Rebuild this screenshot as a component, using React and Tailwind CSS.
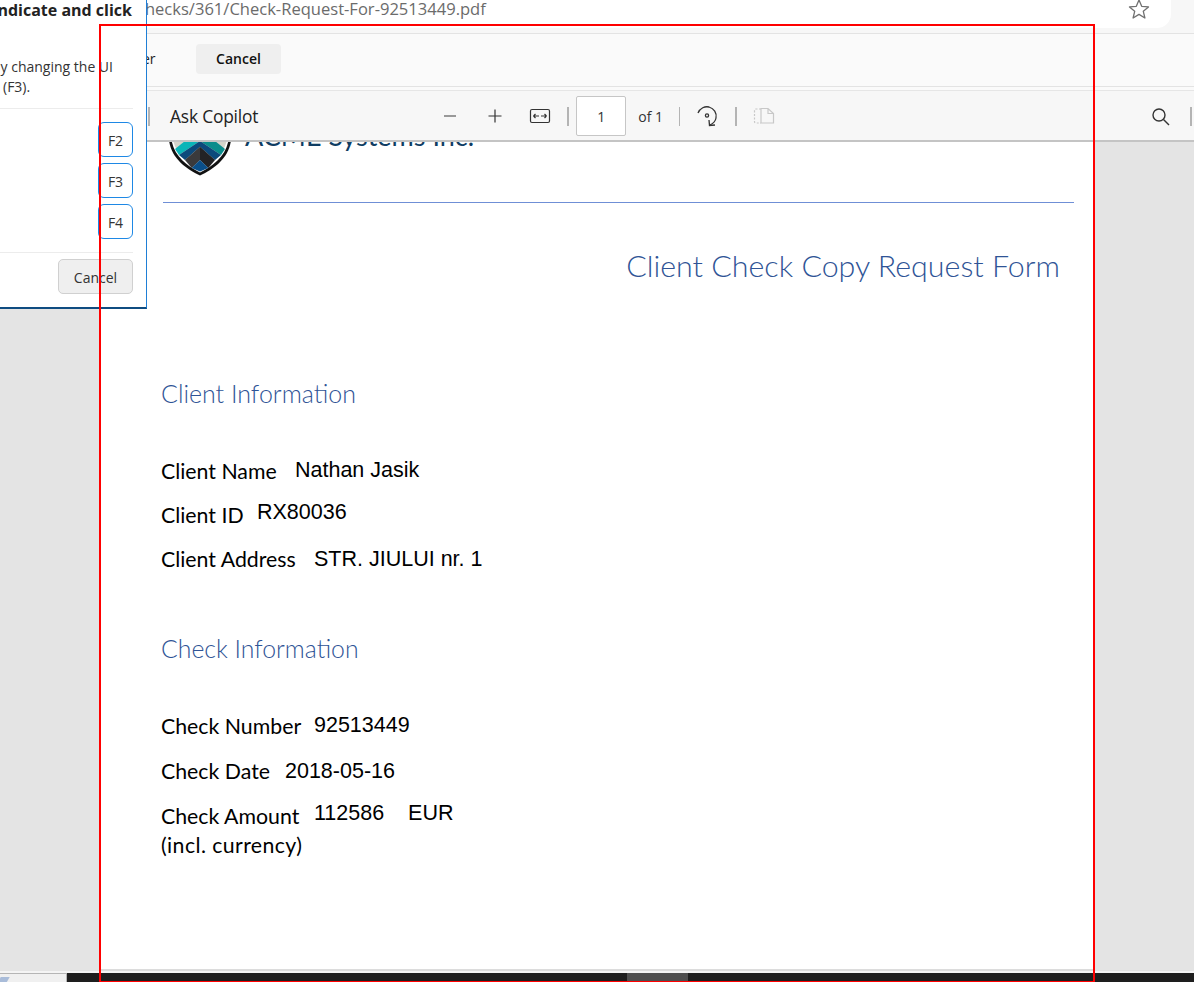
import React from "react";

function Shield() {
  return (
    <svg width="64" height="50" viewBox="0 0 64 50" className="block">
      <path d="M0 0 L0 8 C2 26 17 37 31 43.500 C45 37 60 26 62 8 L62 0 Z" fill="#111" />
      <path d="M2.500 0 L2.500 8 C5 24 18 34 31 40.500 C44 34 57 24 59.500 8 L59.500 0 Z" fill="#fff" />
      <path d="M4 0 L4 8 C7 22 19 32 31 39 C43 32 55 22 58 8 L58 0 Z" fill="#d4d4ca" />
      <path d="M6 17 L31 -3 L31 9 L10 23 Z" fill="#0bb5b8" />
      <path d="M56 17 L31 -3 L31 9 L52 23 Z" fill="#0a8d8c" />
      <path d="M10 23 L31 9 L52 23 L46 28 L31 14.700 L16 28 Z" fill="#0c4a7c" />
      <path d="M16 28 L31 14.700 L31 28 L22.700 36 Z" fill="#3a3a3c" />
      <path d="M46 28 L31 14.700 L31 28 L39.300 36 Z" fill="#232325" />
      <path d="M22.700 36 L31 28 L39.300 36 L31 39.500 Z" fill="#0a4f8a" />
    </svg>
  );
}

function Row({ label, value, valueClass, labelClass = "" }) {
  return (
    <div className="flex items-start">
      <span className={`shrink-0 font-['Lato',sans-serif] text-[21.3px] leading-[26px] text-black whitespace-nowrap ${labelClass}`}>{label}</span>
      <span className={`font-['Liberation_Sans',sans-serif] text-[21.5px] leading-[24px] text-black whitespace-pre ${valueClass}`}>{value}</span>
    </div>
  );
}

export default function App() {
  return (
    <div className="relative w-[1194px] h-[1007px] bg-white overflow-hidden font-['Open_Sans',sans-serif]">
      <div className="h-[982px] flex flex-col bg-[#e4e4e4]">
        {/* address bar */}
        <div className="h-[33px] shrink-0 bg-[#f7f7f7] flex">
          <div className="w-[1171px] h-[28px] bg-white rounded-br-[14px] flex items-start">
            <span className="ml-[137px] -mt-[1px] text-[16.56px] leading-[20px] text-[#6b6b6b] whitespace-nowrap">checks/361/Check-Request-For-92513449.pdf</span>
            <svg className="ml-auto mr-[21px] -mt-[1px]" width="22" height="20" viewBox="0 0 22 20" fill="none" stroke="#707070" strokeWidth="1.300">
              <path d="M11 1 L13.700 7.300 L20.500 7.900 L15.300 12.300 L16.900 19 L11 15.400 L5.100 19 L6.700 12.300 L1.500 7.900 L8.300 7.300 Z" strokeLinejoin="round" />
            </svg>
          </div>
        </div>
        {/* info bar */}
        <div className="h-[54px] shrink-0 bg-[#fafafa] border-t border-b border-[#e3e3e3] flex items-center pl-[196px] pb-[2px] relative">
          <span className="absolute left-[142px] top-[15px] text-[14px] leading-[20px] text-[#222]">er</span>
          <div className="w-[85px] h-[30px] pb-[1px] rounded-[4px] bg-[#efefef] flex items-center justify-center text-[14px] font-semibold text-[#111]">Cancel</div>
        </div>
        <div className="h-[3px] shrink-0 bg-[#fafafa]" />
        {/* pdf toolbar */}
        <div className="h-[52px] shrink-0 bg-[#f7f7f7] border-t border-[#e6e6e6] border-b-[2px] border-b-[#c4c4c4] pt-[1px] flex items-center relative z-10">
          <div className="ml-[148px] w-[2px] h-[19px] bg-[#b4b4b4]" />
          <span className="ml-[20px] text-[17.4px] text-[#222] tracking-[-0.2px] whitespace-nowrap">Ask Copilot</span>
          <svg className="ml-[184px]" width="16" height="16" viewBox="0 0 16 16" stroke="#666" strokeWidth="1.300"><path d="M2 8 H14" /></svg>
          <svg className="ml-[29px]" width="16" height="16" viewBox="0 0 16 16" stroke="#333" strokeWidth="1.200"><path d="M1.500 8 H14.500 M8 1.500 V14.500" /></svg>
          <svg className="ml-[26px]" width="22" height="16" viewBox="0 0 22 16" fill="none" stroke="#333" strokeWidth="1.200">
            <rect x="1.500" y="1.500" width="19" height="13" rx="1.500" />
            <path d="M4.500 8 H10 M4.500 8 L6.500 6 M4.500 8 L6.500 10 M12 8 H17.500 M17.500 8 L15.500 6 M17.500 8 L15.500 10" />
          </svg>
          <div className="ml-[16px] w-[2px] h-[19px] bg-[#b4b4b4]" />
          <div className="ml-[7px] w-[50px] h-[40px] bg-white border border-[#c6c6c6] rounded-[2px] flex items-center justify-center text-[14px] text-[#333]">1</div>
          <span className="ml-[12px] text-[14px] text-[#333] whitespace-nowrap">of 1</span>
          <div className="ml-[16px] w-[1px] h-[19px] bg-[#b4b4b4]" />
          <svg className="ml-[16px]" width="22" height="22" viewBox="0 0 22 22" fill="none" stroke="#333" strokeWidth="1.300">
            <path d="M2 8 C4 3 9 1 13 2 C18 3.500 21 8 20 13 C19.500 16 17 18.500 14 20" />
            <path d="M13 15 L13.500 20.500 L19 20" />
            <circle cx="11" cy="10.500" r="1.600" />
          </svg>
          <div className="ml-[17px] w-[2px] h-[19px] bg-[#b4b4b4]" />
          <svg className="ml-[16px]" width="22" height="18" viewBox="0 0 22 18" fill="none" stroke="#c8c8c8" strokeWidth="1.200">
            <path d="M8 2 H3 Q1.500 2 1.500 3.500 V14.500 Q1.500 16 3 16 H8" strokeDasharray="2 1.500" />
            <path d="M8 1.500 H15 L20.500 6.500 V16 H8 Z M15 1.500 V6.500 H20.500" />
          </svg>
          <svg className="ml-auto mr-[20px]" width="19" height="19" viewBox="0 0 19 19" fill="none" stroke="#333" strokeWidth="1.400">
            <circle cx="8" cy="8" r="6" /><path d="M12.500 12.500 L18 18" />
          </svg>
          <div className="mr-[2px] w-[2px] h-[19px] bg-[#b4b4b4]" />
        </div>
        {/* document area */}
        <div className="flex-1 min-h-0 flex flex-col">
          <div className="flex-1 min-h-0 flex overflow-hidden">
            <div className="w-[101px] shrink-0 bg-[#e4e4e4]" />
            <div className="w-[992px] shrink-0 bg-white border-b-[2px] border-[#dcdcdc] pl-[60px] pr-[20px] flex flex-col">
              <div className="h-[33px] shrink-0 flex items-start gap-[12px]">
                <div className="ml-[8px] -mt-[10px]"><Shield /></div>
                <span className="-mt-[22px] font-['Lato',sans-serif] text-[27px] leading-[32px] text-[#0f3d63] whitespace-nowrap">ACME Systems Inc.</span>
              </div>
              <div className="mt-[27px] ml-[2px] w-[911px] h-[1px] bg-[#6f8fd6]" />
              <div className="mt-[43px] w-[897px] ml-[2px] text-right font-['Lato',sans-serif] font-light text-[30.4px] leading-[38px] text-[#2f5496] whitespace-nowrap">Client Check Copy Request Form</div>
              <div className="mt-[93px] font-['Lato',sans-serif] font-light text-[25px] leading-[32px] text-[#2f5496]">Client Information</div>
              <div className="mt-[49px] flex flex-col">
                <Row label="Client Name" value="Nathan Jasik" labelClass="w-[134px]" valueClass="mt-[0px]" />
                <div className="mt-[18px]"><Row label="Client ID" value="RX80036" labelClass="w-[96px]" valueClass="-mt-[2px]" /></div>
                <div className="mt-[18px]"><Row label="Client Address" value="STR. JIULUI nr. 1" labelClass="w-[153px]" valueClass="mt-[1px]" /></div>
              </div>
              <div className="mt-[61px] font-['Lato',sans-serif] font-light text-[24.8px] leading-[32px] text-[#2f5496]">Check Information</div>
              <div className="mt-[48px] flex flex-col">
                <Row label="Check Number" value="92513449" labelClass="w-[153px]" valueClass="mt-[0px]" />
                <div className="mt-[19px]"><Row label="Check Date" value="2018-05-16" labelClass="w-[124px]" valueClass="mt-[1px]" /></div>
                <div className="mt-[19px]"><Row label="Check Amount" value="112586    EUR" labelClass="w-[153px]" valueClass="-mt-[2px]" /></div>
                <div className="mt-[3px] font-['Lato',sans-serif] text-[21.3px] leading-[26px] tracking-[0.4px] text-black">(incl. currency)</div>
              </div>
            </div>
            <div className="flex-1 bg-[#e4e4e4]" />
          </div>
          <div className="h-[2px] shrink-0 bg-[#f4f4f4]" />
          {/* taskbar sliver */}
          <div className="h-[9px] shrink-0 flex bg-[#1e1e1e]">
            <div className="w-[67px] bg-[#f0f0f0] border-t border-r border-[#b5b5b5] relative overflow-hidden">
              <div className="absolute -left-[1px] top-[3px] w-[9px] h-[6px] bg-[#a9bcd9] -skew-x-[30deg]" />
            </div>
            <div className="ml-[560px] w-[61px] bg-[#4e4e4e]" />
          </div>
        </div>
      </div>

      {/* overlapping dialog */}
      <div className="absolute left-0 top-0 w-[147px] h-[309px] bg-white border-r-[1.500px] border-b-[2px] border-r-[#1f7fd6] border-b-[#0f4c81] z-20 overflow-hidden">
        <div className="absolute right-[14px] top-0 text-[16px] leading-[20px] font-bold text-[#222] whitespace-nowrap">Indicate and click</div>
        <div className="absolute right-[33px] top-[57px] text-[14px] leading-[19px] text-[#333] whitespace-nowrap">y changing the UI</div>
        <div className="absolute left-[3px] top-[77px] text-[14px] leading-[19px] text-[#333] whitespace-nowrap">(F3).</div>
        <div className="absolute left-0 top-[108px] w-[133px] h-[1px] bg-[#ececec]" />
        <div className="absolute left-[98px] top-[122px] flex flex-col gap-[6px]">
          {["F2", "F3", "F4"].map((k) => (
            <div key={k} className="w-[35px] h-[35px] pt-[1px] rounded-[6px] border border-[#1e88e5] bg-white flex items-center justify-center text-[14px] text-[#333]">{k}</div>
          ))}
        </div>
        <div className="absolute left-0 top-[252px] w-[133px] h-[1px] bg-[#ececec]" />
        <div className="absolute left-[58px] top-[259px] w-[75px] h-[35px] pt-[1px] rounded-[5px] border border-[#d0d0d0] bg-[#efefef] flex items-center justify-center text-[14px] text-[#333]">Cancel</div>
      </div>

      {/* red highlight rectangle */}
      <div className="absolute left-[99px] top-[24px] w-[996px] h-[958px] border-2 border-b-[1px] border-[#ff0000] z-30 pointer-events-none" />
    </div>
  );
}
